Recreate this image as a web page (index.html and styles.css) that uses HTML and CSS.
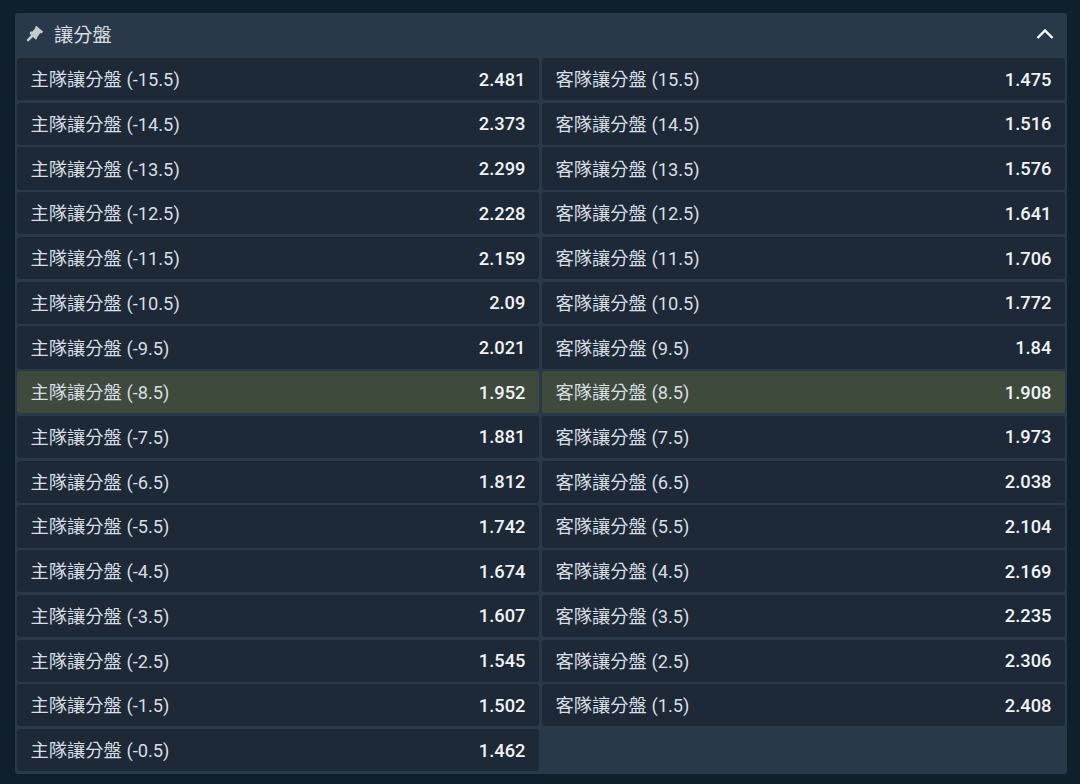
FILE: index.html
```html
<!DOCTYPE html>
<html lang="zh-Hant">
<head>
    <meta charset="UTF-8">
    <title>讓分盤</title>
    <link rel="stylesheet" href="styles.css">
</head>
<body>
    <section class="market">
        <header class="market-head">
            <svg class="pin" viewBox="0 0 18 18" width="18" height="18"><path d="M10.5 1 17 6.5 16 8.2 14.3 8 11.2 12.2 11 14 9.6 14.4 7 12 2.4 16.4 1 16 .8 14.8 5 10 3.6 8.2 4.4 6.6 6.4 6.4 9.4 3 9.2 1.6Z"/></svg>
            <span class="market-title">讓分盤</span>
            <svg class="chevron" viewBox="0 0 18 12" width="18" height="12"><path d="M1.5 10 9 2.5 16.5 10"/></svg>
        </header>
        <div class="odds">
            <div class="cell"><span>主隊讓分盤 (-15.5)</span><b>2.481</b></div>
            <div class="cell"><span>客隊讓分盤 (15.5)</span><b>1.475</b></div>
            <div class="cell"><span>主隊讓分盤 (-14.5)</span><b>2.373</b></div>
            <div class="cell"><span>客隊讓分盤 (14.5)</span><b>1.516</b></div>
            <div class="cell"><span>主隊讓分盤 (-13.5)</span><b>2.299</b></div>
            <div class="cell"><span>客隊讓分盤 (13.5)</span><b>1.576</b></div>
            <div class="cell"><span>主隊讓分盤 (-12.5)</span><b>2.228</b></div>
            <div class="cell"><span>客隊讓分盤 (12.5)</span><b>1.641</b></div>
            <div class="cell"><span>主隊讓分盤 (-11.5)</span><b>2.159</b></div>
            <div class="cell"><span>客隊讓分盤 (11.5)</span><b>1.706</b></div>
            <div class="cell"><span>主隊讓分盤 (-10.5)</span><b>2.09</b></div>
            <div class="cell"><span>客隊讓分盤 (10.5)</span><b>1.772</b></div>
            <div class="cell"><span>主隊讓分盤 (-9.5)</span><b>2.021</b></div>
            <div class="cell"><span>客隊讓分盤 (9.5)</span><b>1.84</b></div>
            <div class="cell main-line"><span>主隊讓分盤 (-8.5)</span><b>1.952</b></div>
            <div class="cell main-line"><span>客隊讓分盤 (8.5)</span><b>1.908</b></div>
            <div class="cell"><span>主隊讓分盤 (-7.5)</span><b>1.881</b></div>
            <div class="cell"><span>客隊讓分盤 (7.5)</span><b>1.973</b></div>
            <div class="cell"><span>主隊讓分盤 (-6.5)</span><b>1.812</b></div>
            <div class="cell"><span>客隊讓分盤 (6.5)</span><b>2.038</b></div>
            <div class="cell"><span>主隊讓分盤 (-5.5)</span><b>1.742</b></div>
            <div class="cell"><span>客隊讓分盤 (5.5)</span><b>2.104</b></div>
            <div class="cell"><span>主隊讓分盤 (-4.5)</span><b>1.674</b></div>
            <div class="cell"><span>客隊讓分盤 (4.5)</span><b>2.169</b></div>
            <div class="cell"><span>主隊讓分盤 (-3.5)</span><b>1.607</b></div>
            <div class="cell"><span>客隊讓分盤 (3.5)</span><b>2.235</b></div>
            <div class="cell"><span>主隊讓分盤 (-2.5)</span><b>1.545</b></div>
            <div class="cell"><span>客隊讓分盤 (2.5)</span><b>2.306</b></div>
            <div class="cell"><span>主隊讓分盤 (-1.5)</span><b>1.502</b></div>
            <div class="cell"><span>客隊讓分盤 (1.5)</span><b>2.408</b></div>
            <div class="cell"><span>主隊讓分盤 (-0.5)</span><b>1.462</b></div>
        </div>
    </section>
</body>
</html>
```

FILE: styles.css
```css
body {
    margin: 0;
    height: 784px;
    padding: 13px 13px 0 15px;
    box-sizing: border-box;
    overflow: hidden;
    background: #0f1f2c;
    font-family: Roboto, "Noto Sans CJK TC", sans-serif;
}
.market {
    height: 761px;
    padding: 0 2px;
    box-sizing: border-box;
    background: #2a3949;
    border-radius: 3px;
}
.market-head {
    display: flex;
    align-items: center;
    height: 45px;
    padding: 0 11px 4px 9px;
    box-sizing: border-box;
    color: #d5dce2;
}
.pin {
    fill: #c3cad0;
}
.market-title {
    margin-left: 10px;
    font-size: 19.3px;
}
.chevron {
    margin-left: auto;
    fill: none;
    stroke: #fff;
    stroke-width: 2.4;
}
.odds {
    display: grid;
    grid-template-columns: 522px 1fr;
    grid-auto-rows: 42.2px;
    gap: 2.55px 3px;
}
.cell {
    display: flex;
    align-items: center;
    justify-content: space-between;
    padding: 0 13.6px 0 13.5px;
    background: #1d2936;
    border-radius: 3px;
    color: #d8dee3;
    font-size: 18px;
}
.cell span {
    margin-bottom: 2px;
    font-size: 18.3px;
}
.cell b {
    font-size: 18.3px;
    font-weight: 500;
    color: #f0f3f5;
}
.main-line {
    background: #3d4a3c;
}
```
